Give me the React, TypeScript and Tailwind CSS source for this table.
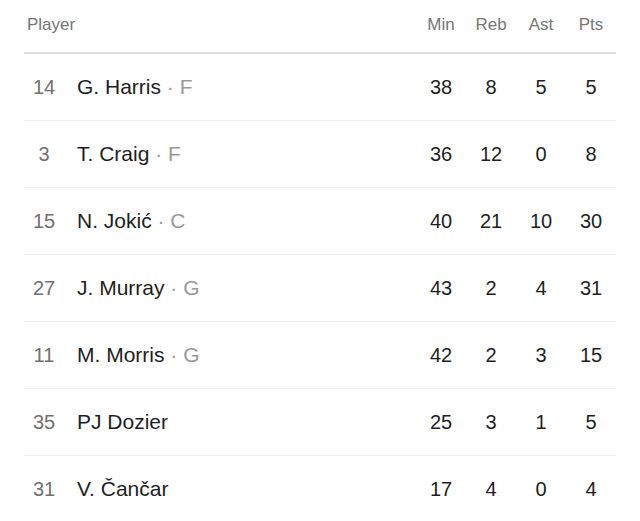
import React from 'react'

type Row = { no: string; name: string; pos?: string; min: number; reb: number; ast: number; pts: number }

const rows: Row[] = [
  { no: '14', name: 'G. Harris', pos: 'F', min: 38, reb: 8, ast: 5, pts: 5 },
  { no: '3', name: 'T. Craig', pos: 'F', min: 36, reb: 12, ast: 0, pts: 8 },
  { no: '15', name: 'N. Jokić', pos: 'C', min: 40, reb: 21, ast: 10, pts: 30 },
  { no: '27', name: 'J. Murray', pos: 'G', min: 43, reb: 2, ast: 4, pts: 31 },
  { no: '11', name: 'M. Morris', pos: 'G', min: 42, reb: 2, ast: 3, pts: 15 },
  { no: '35', name: 'PJ Dozier', min: 25, reb: 3, ast: 1, pts: 5 },
  { no: '31', name: 'V. Čančar', min: 17, reb: 4, ast: 0, pts: 4 },
]

const App: React.FC = () => {
  return (
    <div className="w-[640px] h-[521px] overflow-hidden bg-white px-6 font-['Liberation_Sans',Arial,sans-serif]">
      <div className="grid grid-cols-[40px_1fr_50px_50px_50px_50px] items-center h-[54px] pb-[3px] border-b-2 border-[#dedede] text-[17px] text-[#767676]">
        <div className="col-span-2 pl-[3px]">Player</div>
        <div className="text-center">Min</div>
        <div className="text-center">Reb</div>
        <div className="text-center">Ast</div>
        <div className="text-center">Pts</div>
      </div>
      {rows.map((r) => (
        <div
          key={r.no}
          className="grid grid-cols-[40px_1fr_50px_50px_50px_50px] items-center h-[67px] border-b border-[#eeeeee] text-[20px] text-[#1e1e1e]"
        >
          <div className="text-center text-[#707070]">{r.no}</div>
          <div className="pl-[13px] text-[21px]">
            {r.name}
            {r.pos && <span className="text-[#999999]"> · {r.pos}</span>}
          </div>
          <div className="text-center">{r.min}</div>
          <div className="text-center">{r.reb}</div>
          <div className="text-center">{r.ast}</div>
          <div className="text-center">{r.pts}</div>
        </div>
      ))}
    </div>
  )
}

export default App
